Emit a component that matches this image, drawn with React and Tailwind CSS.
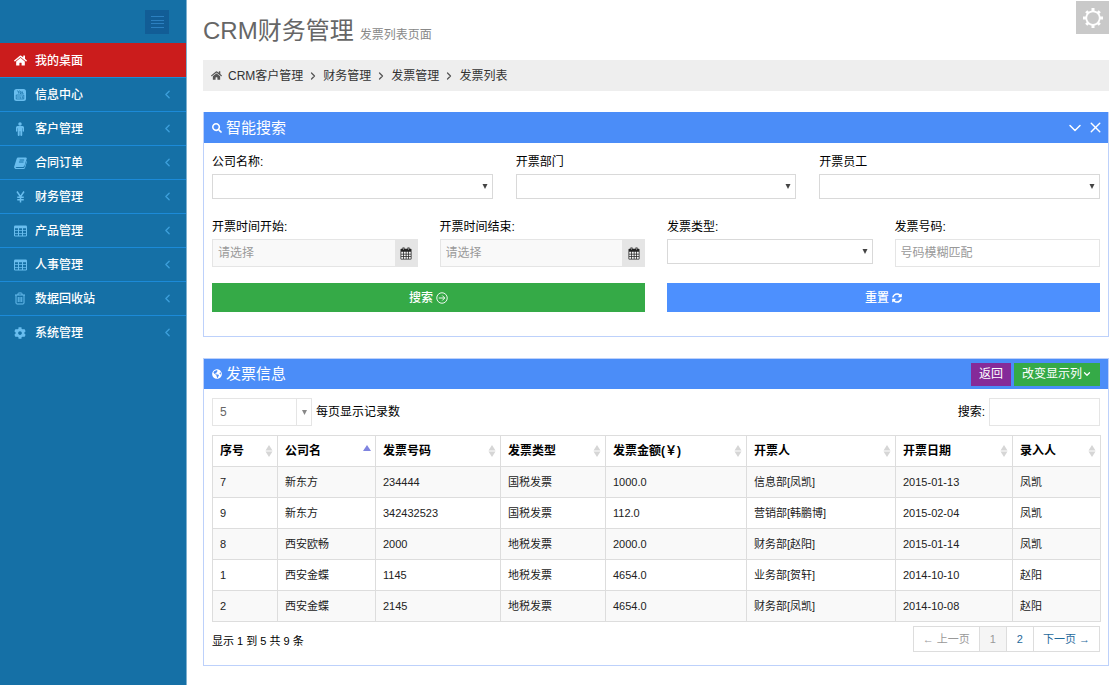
import React from 'react';
import { FaHome, FaCog, FaSearch, FaGlobeAmericas, FaSyncAlt } from 'react-icons/fa';
import { ChevronDown, ChevronLeft, ChevronRight, X } from 'lucide-react';

const BookIcon = () => (
    <svg width="13" height="12" viewBox="0 0 26 24" fill="currentColor">
        <path d="M9 1h14.5c1.600 0 2.400 1 1.900 2.600l-4.400 14c-.5 1.400-1.500 2.200-3 2.200H5c-1.300 0-1.900.5-1.700 1.200.2.600.8.900 1.700.9h14c1 0 1.700-.4 2-1.300l4.300-13.200c.7.500.9 1.300.6 2.300l-3.900 12.100c-.5 1.400-1.600 2.200-3 2.200H4.500c-2 0-3.700-1.300-4.200-3-.2-.7-.1-1.400.2-2.100L5.300 3.700C5.900 2 7 1 9 1z" />
        <path d="M11.200 6h9.200M9.900 10h9.200" stroke="#1570a6" strokeWidth="2" />
    </svg>
);

const PersonIcon = () => (
    <svg width="10" height="14" viewBox="0 0 20 28" fill="currentColor">
        <circle cx="10" cy="4" r="3.500" />
        <path d="M5 8h10q3 0 3 3v7q0 1.500-1.300 1.500T15.400 18v-5.500h-.9V26q0 1.800-1.900 1.800T10.700 26v-7.500H9.300V26q0 1.800-1.900 1.800T5.500 26V12.500h-.9V18q0 1.500-1.300 1.500T2 18v-7q0-3 3-3z" />
    </svg>
);

const YenIcon = () => (
    <svg width="9" height="12" viewBox="0 0 18 24" fill="none" stroke="currentColor" strokeWidth="3">
        <path d="M2 1l7 10.500L16 1M9 11v12M2.500 12.500h13M2.500 17.500h13" />
    </svg>
);

const TableIcon = () => (
    <svg width="13" height="12" viewBox="0 0 26 24">
        <rect x="0" y="1" width="26" height="22" rx="2.500" fill="currentColor" />
        <path d="M2 6.500h6v4H2zM10 6.500h6v4h-6zM18 6.500h6v4h-6zM2 12h6v4H2zM10 12h6v4h-6zM18 12h6v4h-6zM2 17.500h6v3.500H2zM10 17.500h6v3.500h-6zM18 17.500h6v3.500h-6z" fill="#1570a6" />
    </svg>
);

const TrashIcon = () => (
    <svg width="12" height="13" viewBox="0 0 24 26" fill="none" stroke="currentColor" strokeWidth="2">
        <path d="M2 6h20M8 6V3.500Q8 2 9.500 2h5Q16 2 16 3.500V6M4 6v16q0 2 2 2h12q2 0 2-2V6M8.500 10v10M12 10v10M15.500 10v10" />
    </svg>
);

const MessageIcon = () => (
    <svg width="12" height="12" viewBox="0 0 24 24">
        <rect width="24" height="24" rx="5" fill="currentColor" />
        <path d="M7 3l2 3.500V9M11 3L9 6.500M12 5.500h2.500V9H12zM17 5v4h2M4.500 12h15v8h-15z" fill="none" stroke="#1570a6" strokeWidth="1.400" />
        <path d="M8 14v4M12 14v4h2M16.500 14v4h2" stroke="#1570a6" strokeWidth="1.400" fill="none" />
    </svg>
);

const CalendarIcon = () => (
    <svg width="12" height="13" viewBox="0 0 24 26">
        <path d="M1 5q0-1.500 1.500-1.500H5V1h4v2.500h6V1h4v2.500h2.500Q23 3.500 23 5v18.500q0 1.500-1.500 1.500h-19Q1 25 1 23.500z" fill="#222" />
        <path d="M2.500 9.500h4v4h-4zM8 9.500h3.500v4H8zM13 9.500h3.500v4H13zM18 9.500h3.500v4H18zM2.500 15h4v3.500h-4zM8 15h3.500v3.500H8zM13 15h3.500v3.500H13zM18 15h3.500v3.500H18zM2.500 20h4v3.500h-4zM8 20h3.500v3.500H8zM13 20h3.500v3.500H13zM18 20h3.500v3.500H18z" fill="#f5f5f5" />
        <path d="M7 2v4M17 2v4" stroke="#ccc" strokeWidth="1" />
    </svg>
);

const GearIcon = () => (
    <svg width="20" height="20" viewBox="0 0 40 40" fill="none" stroke="#fff">
        <circle cx="20" cy="20" r="13.500" strokeWidth="3.500" />
        <path d="M20 0v6M20 34v6M0 20h6M34 20h6M6.500 6.500l4 4M29.500 29.500l4 4M6.500 33.500l4-4M29.500 10.500l4-4" strokeWidth="6" />
    </svg>
);

const GoIcon = () => (
    <svg width="12" height="12" viewBox="0 0 24 24" fill="none" stroke="currentColor" strokeWidth="1.800">
        <circle cx="12" cy="12" r="10.500" />
        <path d="M5.500 12h12M12.500 7l5 5-5 5" />
    </svg>
);

const menu = [
    { label: '我的桌面', icon: <FaHome size={13} />, active: true },
    { label: '信息中心', icon: <MessageIcon /> },
    { label: '客户管理', icon: <PersonIcon /> },
    { label: '合同订单', icon: <BookIcon /> },
    { label: '财务管理', icon: <YenIcon /> },
    { label: '产品管理', icon: <TableIcon /> },
    { label: '人事管理', icon: <TableIcon /> },
    { label: '数据回收站', icon: <TrashIcon /> },
    { label: '系统管理', icon: <FaCog size={12} /> },
];

const crumbs = ['CRM客户管理', '财务管理', '发票管理', '发票列表'];

const columns = [
    { title: '序号', width: 'w-[65px]' },
    { title: '公司名', width: 'w-[98px]', sorted: true },
    { title: '发票号码', width: 'w-[125px]' },
    { title: '发票类型', width: 'w-[105px]' },
    { title: '发票金额(￥)', width: 'w-[141px]' },
    { title: '开票人', width: 'w-[149px]' },
    { title: '开票日期', width: 'w-[117px]' },
    { title: '录入人', width: 'w-[88px]' },
];

const rows = [
    ['7', '新东方', '234444', '国税发票', '1000.0', '信息部[凤凯]', '2015-01-13', '凤凯'],
    ['9', '新东方', '342432523', '国税发票', '112.0', '营销部[韩鹏博]', '2015-02-04', '凤凯'],
    ['8', '西安欧畅', '2000', '地税发票', '2000.0', '财务部[赵阳]', '2015-01-14', '凤凯'],
    ['1', '西安金蝶', '1145', '地税发票', '4654.0', '业务部[贺轩]', '2014-10-10', '赵阳'],
    ['2', '西安金蝶', '2145', '地税发票', '4654.0', '财务部[凤凯]', '2014-10-08', '赵阳'],
];

const Label = ({ id, children }) => (
    <label htmlFor={id} className="mb-[3px] block h-[18px] leading-[18px]">{children}</label>
);

const SelectField = ({ id, label }) => (
    <div>
        <Label id={id}>{label}</Label>
        <div className="relative">
            <select id={id} className="block h-[25px] w-full appearance-none border border-[#d9d9d9] bg-white px-1">
                <option></option>
            </select>
            <svg className="pointer-events-none absolute top-[10px] right-[5px]" width="6" height="6" viewBox="0 0 6 6" fill="#444">
                <path d="M.5 0h5L3 5z" />
            </svg>
        </div>
    </div>
);

const DateField = ({ id, label }) => (
    <div>
        <Label id={id}>{label}</Label>
        <div className="flex h-7">
            <input id={id} placeholder="请选择" className="min-w-0 flex-1 border border-r-0 border-[#e5e5e5] bg-[#f9f9f9] px-[5px] placeholder:text-[#999]" />
            <button type="button" aria-label={label} className="flex w-[23px] items-center justify-center bg-[#e5e5e5]">
                <CalendarIcon />
            </button>
        </div>
    </div>
);

const SortIcon = ({ sorted }) => (
    sorted ? (
        <svg width="8" height="14" viewBox="0 0 8 14"><path d="M4 1l4 6H0z" fill="#7f84e0" /></svg>
    ) : (
        <svg width="8" height="14" viewBox="0 0 8 14" fill="#d6d6d6"><path d="M4 1l3.500 5.500h-7zM4 13L.5 7.500h7z" /></svg>
    )
);

const Sidebar = () => (
    <aside className="w-[187px] shrink-0 border-r border-[#7fb1d0] bg-[#1570a6]">
        <div className="flex h-[43px] justify-end pt-[10px] pr-[17px]">
            <button type="button" aria-label="菜单" className="flex size-6 items-center justify-center bg-[#125d96]">
                <svg width="13" height="12" viewBox="0 0 13 12" stroke="#2c80c0">
                    <path d="M0 .5h13M0 4.500h13M0 7.500h13M0 11.500h13" />
                </svg>
            </button>
        </div>
        <nav>
            {menu.map((item) => (
                <a
                    key={item.label}
                    href="#"
                    className={`flex h-[34px] items-center pr-3 pl-[13px] font-medium text-white ${item.active ? 'bg-[#cb1c1c]' : 'border-t border-[#1c8ad8]'}`}
                >
                    <span className={`mr-2 flex w-[14px] justify-center ${item.active ? 'text-white' : 'text-[#69bdee]'}`}>{item.icon}</span>
                    <span className="pt-px">{item.label}</span>
                    {!item.active && <ChevronLeft size={13} strokeWidth={2.5} className="ml-auto text-[#3d9fdb]" />}
                </a>
            ))}
        </nav>
    </aside>
);

const SearchPanel = () => (
    <section className="mt-[21px] border border-t-0 border-[#bdd1fb]">
        <header className="flex h-[31px] items-center bg-[#4b8df8] px-2 text-white">
            <FaSearch size={10} />
            <h2 className="ml-1 text-[15px]">智能搜索</h2>
            <div className="ml-auto flex items-center gap-[2px]">
                <button type="button" aria-label="收起"><ChevronDown size={20} strokeWidth={1.8} /></button>
                <button type="button" aria-label="关闭" className="-mr-1"><X size={17} strokeWidth={2} /></button>
            </div>
        </header>
        <form className="px-2 pt-[10px] pb-6">
            <div className="grid grid-cols-3 gap-[23px]">
                <SelectField id="company" label="公司名称:" />
                <SelectField id="dept" label="开票部门" />
                <SelectField id="staff" label="开票员工" />
            </div>
            <div className="mt-[19px] grid grid-cols-4 gap-[22px]">
                <DateField id="start" label="开票时间开始:" />
                <DateField id="end" label="开票时间结束:" />
                <SelectField id="type" label="发票类型:" />
                <div>
                    <Label id="number">发票号码:</Label>
                    <input id="number" placeholder="号码模糊匹配" className="block h-7 w-full border border-[#e5e5e5] px-[5px] placeholder:text-[#999]" />
                </div>
            </div>
            <div className="mt-4 grid grid-cols-2 gap-[22px]">
                <button type="button" className="flex h-[29px] items-center justify-center gap-[3px] bg-[#35aa47] font-medium text-white">
                    搜索<GoIcon />
                </button>
                <button type="reset" className="flex h-[29px] items-center justify-center gap-[3px] bg-[#4d90fe] font-medium text-white">
                    重置<FaSyncAlt size={10} />
                </button>
            </div>
        </form>
    </section>
);

const InvoicePanel = () => (
    <section className="mt-[21px] border border-[#bdd1fb]">
        <header className="flex h-[30px] items-center bg-[#4b8df8] px-2 text-white">
            <FaGlobeAmericas size={10} />
            <h2 className="ml-1 text-[15px]">发票信息</h2>
            <div className="ml-auto flex gap-[3px]">
                <button type="button" className="h-[23px] bg-[#852b99] px-2">返回</button>
                <button type="button" className="flex h-[23px] items-center bg-[#35aa47] px-2">
                    改变显示列<ChevronDown size={10} strokeWidth={3} />
                </button>
            </div>
        </header>
        <div className="px-2 pt-[9px] pb-[13px]">
            <div className="flex items-center justify-between">
                <div className="flex items-center gap-1">
                    <div className="relative">
                        <select id="length" defaultValue="5" className="block h-7 w-[100px] appearance-none border border-[#e5e5e5] bg-white px-[7px] text-[#666]">
                            <option>5</option>
                            <option>10</option>
                        </select>
                        <span className="pointer-events-none absolute inset-y-0 right-0 flex w-4 items-center justify-center border-l border-[#e5e5e5]">
                            <svg width="5" height="5" viewBox="0 0 5 5" fill="#888"><path d="M0 0h5L2.500 5z" /></svg>
                        </span>
                    </div>
                    <label htmlFor="length">每页显示记录数</label>
                </div>
                <div className="flex items-center gap-1">
                    <label htmlFor="filter">搜索:</label>
                    <input id="filter" className="h-7 w-[111px] border border-[#e5e5e5] px-[6px]" />
                </div>
            </div>
            <table className="mt-[9px] w-full table-fixed border-separate border-spacing-0 border-t border-l border-[#ddd]">
                <thead>
                    <tr className="h-[31px]">
                        {columns.map((col) => (
                            <th key={col.title} className={`border-r border-b border-[#ddd] pr-1 pl-[7px] text-left font-bold ${col.width}`}>
                                <button type="button" className="flex w-full items-center justify-between">
                                    {col.title}
                                    <SortIcon sorted={col.sorted} />
                                </button>
                            </th>
                        ))}
                    </tr>
                </thead>
                <tbody className="text-[11px]">
                    {rows.map((row) => (
                        <tr key={row[0]} className="h-[31px] odd:bg-[#f9f9f9]">
                            {row.map((cell, i) => (
                                <td key={i} className="border-r border-b border-[#ddd] px-[7px] text-[#222]">{cell}</td>
                            ))}
                        </tr>
                    ))}
                </tbody>
            </table>
            <div className="mt-1 flex items-center justify-between text-[11px]">
                <p className="pt-[3px]">显示 1 到 5 共 9 条</p>
                <nav className="flex h-[26px] divide-x divide-[#ddd] border border-[#ddd] text-[#1f6a9c]">
                    <button type="button" className="px-[9px] text-[#999]">← 上一页</button>
                    <button type="button" className="bg-[#f5f5f5] px-[10px] text-[#999]">1</button>
                    <button type="button" className="px-[10px]">2</button>
                    <button type="button" className="px-[9px]">下一页 →</button>
                </nav>
            </div>
        </div>
    </section>
);

const App = () => {
    return (
        <div className="flex min-h-screen bg-white font-['Liberation_Sans','Noto_Sans_CJK_SC',sans-serif] text-[12px] leading-[18px] text-black">
            <Sidebar />
            <main className="min-w-0 flex-1 pr-[11px] pl-4">
                <div className="flex h-[60px] items-start justify-between">
                    <div className="flex items-baseline gap-[6px] pt-[14px]">
                        <h1 className="text-[24px] leading-[34px] text-[#666]">CRM财务管理</h1>
                        <small className="text-[12px] text-[#888]">发票列表页面</small>
                    </div>
                    <button type="button" aria-label="设置" className="mt-px flex size-[33px] items-center justify-center bg-[#c9c9c9]">
                        <GearIcon />
                    </button>
                </div>
                <nav className="flex h-[31px] items-center bg-[#eee] px-2 text-[#333]">
                    <FaHome size={11} className="mr-[6px] text-[#555]" />
                    {crumbs.map((crumb, i) => (
                        <React.Fragment key={crumb}>
                            {i > 0 && <ChevronRight size={12} strokeWidth={2.5} className="mx-1 text-[#555]" />}
                            <a href="#">{crumb}</a>
                        </React.Fragment>
                    ))}
                </nav>
                <SearchPanel />
                <InvoicePanel />
            </main>
        </div>
    );
};

export default App;
